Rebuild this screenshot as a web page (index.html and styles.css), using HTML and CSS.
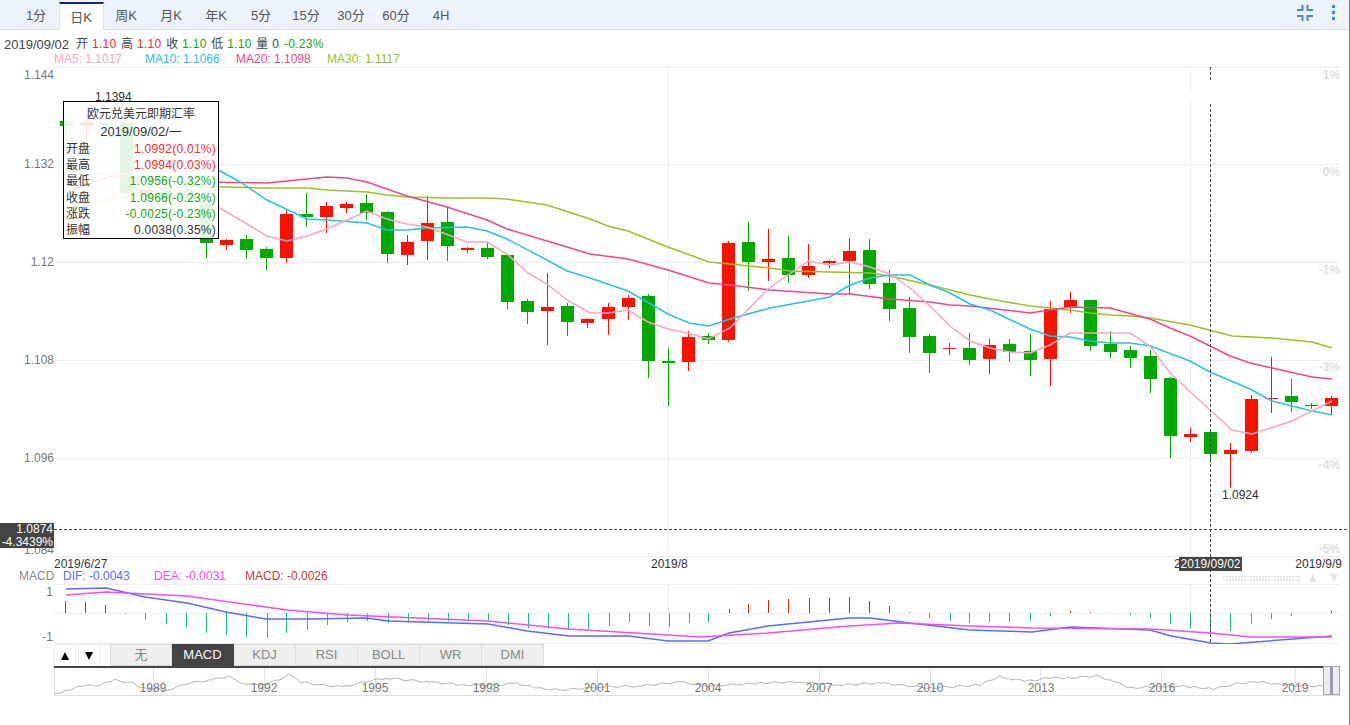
FILE: index.html
```html
<!DOCTYPE html>
<html lang="zh-CN">
<head>
    <meta charset="UTF-8">
    <meta name="viewport" content="width=device-width, initial-scale=1.0">
    <title>欧元兑美元即期汇率</title>
    <link rel="stylesheet" href="styles.css">
</head>
<body>
    <div class="kline-box">
        <div class="toolbar">
            <div class="tabs">
                <span class="tab">1分</span>
                <span class="tab active">日K</span>
                <span class="tab">周K</span>
                <span class="tab">月K</span>
                <span class="tab">年K</span>
                <span class="tab">5分</span>
                <span class="tab">15分</span>
                <span class="tab">30分</span>
                <span class="tab">60分</span>
                <span class="tab">4H</span>
            </div>
            <div class="tools">
                <svg class="icon-shrink" width="16" height="16" viewBox="0 0 16 16">
                    <path d="M4.5 0h2v6H0V4h4.5zM9.5 0h2v4H16v2H9.5zM0 10h6.5v6h-2v-4H0zM9.5 10H16v2h-4.5v4h-2z" fill="#4a86d8"/>
                </svg>
                <div class="icon-more"><i></i><i></i><i></i></div>
            </div>
        </div>

        <div class="quote-row">
            <span class="quote-date">2019/09/02</span>
            <span>开 <b class="up">1.10</b></span>
            <span>高 <b class="up">1.10</b></span>
            <span>收 <b class="down">1.10</b></span>
            <span>低 <b class="down">1.10</b></span>
            <span>量 0</span>
            <b class="down">-0.23%</b>
        </div>
        <div class="ma-row">
            <span class="ma5">MA5: 1.1017</span>
            <span class="ma10">MA10: 1.1066</span>
            <span class="ma20">MA20: 1.1098</span>
            <span class="ma30">MA30: 1.1117</span>
        </div>

        <svg id="main-chart" class="main-chart" width="1350" height="490" viewBox="0 67 1350 490">
            <g id="main-grid"></g>
            <g class="axis-y">
                <text x="54" y="79">1.144</text>
                <text x="54" y="168">1.132</text>
                <text x="54" y="266">1.12</text>
                <text x="54" y="364">1.108</text>
                <text x="54" y="462">1.096</text>
                <text x="54" y="554">1.084</text>
            </g>
            <g class="axis-pct">
                <text x="1340" y="79">1%</text>
                <text x="1340" y="176">0%</text>
                <text x="1340" y="274">-1%</text>
                <text x="1340" y="371">-3%</text>
                <text x="1340" y="469">-4%</text>
                <text x="1340" y="553">-5%</text>
            </g>
            <g id="candles"></g>
            <g id="ma-lines"></g>
            <text class="mark" x="95" y="101">1.1394</text>
            <text class="mark" x="1222" y="499">1.0924</text>
        </svg>

        <div class="date-row">
            <span>2019/6/27</span>
            <span class="date-mid">2019/8</span>
            <span class="date-cut">2</span>
            <span class="date-end">2019/9/9</span>
        </div>
        <div class="macd-row">
            <span class="macd-name">MACD</span>
            <span class="dif">DIF: -0.0043</span>
            <span class="dea">DEA: -0.0031</span>
            <span class="macd-val">MACD: -0.0026</span>
            <div class="scroller">
                <div class="scroll-dots"></div>
                <span class="tri-up"></span>
                <span class="tri-down"></span>
            </div>
        </div>

        <svg id="macd-chart" class="macd-chart" width="1350" height="60" viewBox="0 584 1350 60">
            <g id="macd-grid"></g>
            <g class="axis-y">
                <text x="53" y="596">1</text>
                <text x="53" y="641">-1</text>
            </g>
            <g id="macd-bars"></g>
            <g id="macd-lines"></g>
        </svg>

        <div class="indicator-row">
            <span class="arrow-btn"><i class="arrow-up"></i></span>
            <span class="arrow-btn"><i class="arrow-down"></i></span>
            <span class="arrow-gap"></span>
            <span class="ind-tab">无</span>
            <span class="ind-tab active">MACD</span>
            <span class="ind-tab">KDJ</span>
            <span class="ind-tab">RSI</span>
            <span class="ind-tab">BOLL</span>
            <span class="ind-tab">WR</span>
            <span class="ind-tab">DMI</span>
        </div>

        <svg id="navigator" class="navigator" width="1350" height="30" viewBox="0 666 1350 30">
            <rect x="54" y="666" width="1270" height="2" fill="#444"/>
            <g id="nav-grid"></g>
            <polyline id="nav-line" class="nav-line"/>
            <g class="nav-years">
                <text x="153" y="692">1989</text>
                <text x="264" y="692">1992</text>
                <text x="375" y="692">1995</text>
                <text x="486" y="692">1998</text>
                <text x="597" y="692">2001</text>
                <text x="708" y="692">2004</text>
                <text x="819" y="692">2007</text>
                <text x="930" y="692">2010</text>
                <text x="1041" y="692">2013</text>
                <text x="1162" y="692">2016</text>
                <text x="1295" y="692">2019</text>
            </g>
            <rect class="nav-handle" x="1323.5" y="666.5" width="16" height="28"/>
            <rect x="1330" y="667" width="3" height="27" fill="#9a9ab0"/>
        </svg>

        <!-- 浮层 -->
        <div class="price-tag">1.0874<br>-4.3439%</div>
        <div class="date-tag">2019/09/02</div>
        <svg class="crosshair" width="1350" height="725">
            <path d="M1210.5 67V80M1210.5 104V643M54 529.5H1350"/>
        </svg>
        <div class="tip">
            <div class="tip-title">欧元兑美元即期汇率</div>
            <div class="tip-date">2019/09/02/一</div>
            <div class="tip-line"><span>开盘</span><span class="up">1.0992(0.01%)</span></div>
            <div class="tip-line"><span>最高</span><span class="up">1.0994(0.03%)</span></div>
            <div class="tip-line"><span>最低</span><span class="down">1.0956(-0.32%)</span></div>
            <div class="tip-line"><span>收盘</span><span class="down">1.0966(-0.23%)</span></div>
            <div class="tip-line"><span>涨跌</span><span class="down">-0.0025(-0.23%)</span></div>
            <div class="tip-line"><span>振幅</span><span>0.0038(0.35%)</span></div>
        </div>
    </div>
    <script src="chart.js"></script>
</body>
</html>
```

FILE: styles.css
```css
* {
    box-sizing: border-box;
}
body {
    margin: 0;
    background: #fff;
    font-family: "Liberation Sans", "Noto Sans CJK SC", sans-serif;
    font-size: 12px;
    color: #444;
}
svg {
    display: block;
}
b {
    font-weight: normal;
}
.up {
    color: #f0302a;
}
.down {
    color: #12a812;
}
.kline-box {
    position: relative;
    width: 1350px;
    height: 725px;
    border-right: 1px solid #777;
    overflow: hidden;
}
.toolbar {
    display: flex;
    justify-content: space-between;
    height: 30px;
    background: #ecf3fd;
    border-bottom: 1px solid #d9e3f0;
}
.tabs {
    display: flex;
    padding-left: 13.5px;
}
.tab {
    width: 45px;
    height: 30px;
    line-height: 31px;
    text-align: center;
    font-size: 13px;
    color: #555;
}
.tab.active {
    margin-top: 2px;
    height: 28px;
    line-height: 27px;
    background: #fff;
    border-top: 2px solid #0b2a80;
    border-left: 1px solid #d9e3f0;
    border-right: 1px solid #d9e3f0;
}
.tools {
    display: flex;
    align-items: flex-start;
    gap: 19px;
    padding: 5px 14px 0 0;
}
.icon-more {
    display: flex;
    flex-direction: column;
    gap: 3px;
}
.icon-more i {
    width: 3px;
    height: 3px;
    background: #4a86d8;
}
.quote-row {
    display: flex;
    gap: 4.6px;
    height: 21px;
    padding: 7px 0 0 4px;
    letter-spacing: 0.3px;
    line-height: 15px;
}
.quote-date {
    width: 67.4px;
    font-size: 13px;
    letter-spacing: 0;
}
.ma-row {
    display: flex;
    height: 16px;
    padding: 1px 0 0 54px;
    line-height: 14px;
}
.ma-row span {
    width: 91px;
}
.ma5 { color: #f9a5c0; }
.ma10 { color: #2bc0e0; }
.ma20 { color: #f0478a; }
.ma30 { color: #9abf28; }
.axis-y text {
    font-size: 12px;
    fill: #777;
    text-anchor: end;
}
.axis-pct text {
    font-size: 12px;
    font-weight: bold;
    fill: #dedede;
    text-anchor: end;
}
.mark {
    font-size: 12px;
    fill: #333;
}
.date-row {
    position: relative;
    height: 14px;
    padding-left: 54px;
    line-height: 14px;
    color: #333;
}
.date-mid {
    position: absolute;
    left: 651px;
}
.date-cut {
    position: absolute;
    left: 1174px;
}
.date-end {
    position: absolute;
    right: 7px;
}
.macd-row {
    position: relative;
    display: flex;
    height: 13px;
    padding-left: 19px;
    line-height: 11px;
}
.macd-name {
    width: 44px;
    color: #888;
}
.dif, .dea, .macd-val {
    width: 91px;
}
.dif { color: #5a6cf5; }
.dea { color: #f050f0; }
.macd-val { color: #c43a3a; }
.scroller {
    position: absolute;
    left: 1223px;
    top: 3px;
    display: flex;
    align-items: center;
    height: 8px;
}
.scroll-dots {
    width: 77px;
    height: 6px;
    margin-right: 9px;
    background:
        repeating-linear-gradient(0deg, transparent 0 2px, #fff 2px 3px),
        repeating-linear-gradient(90deg, #e4e4e4 0 2px, #fff 2px 3px);
}
.tri-up, .tri-down {
    width: 0;
    height: 0;
    border-left: 4px solid transparent;
    border-right: 4px solid transparent;
}
.tri-up {
    border-bottom: 8px solid #e4e4e4;
    margin-right: 13px;
}
.tri-down {
    border-top: 8px solid #e4e4e4;
}
.indicator-row {
    display: flex;
    height: 22px;
    padding-left: 54px;
}
.arrow-btn {
    display: flex;
    align-items: center;
    justify-content: center;
    width: 22px;
    margin-right: 2px;
    border: 1px solid #eee;
    border-bottom: 0;
}
.arrow-btn + .arrow-btn {
    margin-right: 0;
}
.arrow-up, .arrow-down {
    width: 0;
    height: 0;
    border-left: 4.5px solid transparent;
    border-right: 4.5px solid transparent;
}
.arrow-up {
    border-bottom: 8px solid #000;
}
.arrow-down {
    border-top: 8px solid #000;
}
.arrow-gap {
    width: 10px;
    border-top: 1px solid #eee;
}
.ind-tab {
    width: 62px;
    text-align: center;
    line-height: 20px;
    font-size: 13px;
    color: #888;
    background: #eee;
    border: 1px solid #ddd;
    border-left: 0;
}
.ind-tab:nth-child(4) {
    border-left: 1px solid #ddd;
}
.ind-tab.active {
    background: #444;
    border-color: #444;
    color: #fff;
}
.nav-line {
    fill: none;
    stroke: #b5b5b5;
    stroke-width: 1;
}
.nav-years text {
    font-size: 12px;
    fill: #777;
    text-anchor: middle;
}
.nav-handle {
    fill: #ececf0;
    stroke: #a0a0b8;
}
.price-tag {
    position: absolute;
    left: 0;
    top: 523px;
    width: 54px;
    height: 25px;
    padding-right: 1px;
    background: #444;
    color: #fff;
    text-align: right;
    line-height: 12.5px;
}
.date-tag {
    position: absolute;
    left: 1179px;
    top: 557px;
    width: 63px;
    height: 14px;
    background: #444;
    color: #fff;
    text-align: center;
    line-height: 14px;
}
.crosshair {
    position: absolute;
    left: 0;
    top: 0;
    pointer-events: none;
}
.crosshair path {
    fill: none;
    stroke: #444;
    stroke-dasharray: 3 2;
}
.tip {
    position: absolute;
    left: 63px;
    top: 101px;
    width: 156px;
    height: 138px;
    padding: 4px 2px 0;
    background: rgba(255, 255, 255, 0.89);
    border: 1px solid #000;
    color: #333;
    line-height: 16.2px;
}
.tip-title, .tip-date {
    text-align: center;
}
.tip-title {
    height: 18px;
}
.tip-date {
    font-size: 13px;
    height: 17px;
}
.tip-line {
    display: flex;
    justify-content: space-between;
}
.tip-line span:last-child {
    letter-spacing: 0.25px;
}
```

FILE: chart.js
```js
// data is read in page pixels, each svg viewBox matches its place on the page
var NS = 'http://www.w3.org/2000/svg';
var RED = '#f51400', GREEN = '#00a800';

function add(parent, tag, attrs) {
    var el = document.createElementNS(NS, tag);
    for (var k in attrs) el.setAttribute(k, attrs[k]);
    parent.appendChild(el);
    return el;
}

function line(parent, x1, y1, x2, y2, color) {
    add(parent, 'line', { x1: x1, y1: y1, x2: x2, y2: y2, stroke: color });
}

function polyline(parent, pts, color) {
    add(parent, 'polyline', {
        points: pts.map(function (p) { return p.join(','); }).join(' '),
        fill: 'none',
        stroke: color,
        'stroke-width': 1.5
    });
}

// grid
var GRID = '#ececec';
var mainGrid = document.getElementById('main-grid');
[67, 164, 262, 360, 458, 556].forEach(function (y) {
    line(mainGrid, 54, y + 0.5, 1340, y + 0.5, GRID);
});
line(mainGrid, 668.5, 67, 668.5, 556, GRID);
line(mainGrid, 1190.5, 67, 1190.5, 92, GRID);
line(mainGrid, 1190.5, 100, 1190.5, 556, GRID);

var macdGrid = document.getElementById('macd-grid');
[584, 613, 643].forEach(function (y) {
    line(macdGrid, 54, y + 0.5, 1340, y + 0.5, GRID);
});
line(macdGrid, 668.5, 584, 668.5, 643, GRID);
line(macdGrid, 1190.5, 584, 1190.5, 643, GRID);

// candles: x, up?, body top, body bottom, wick top, wick bottom
var candles = [
    [66, 0, 121, 126, 114, 150], [86, 1, 122, 126, 114, 150], [106, 0, 123, 125, 118, 130],
    [126, 0, 123, 193, 118, 200], [146, 1, 190, 197, 187, 210], [166, 0, 188, 199, 186, 205],
    [186, 0, 190, 198, 188, 208], [206, 0, 200, 243, 197, 258], [226, 1, 240, 245, 239, 250],
    [246, 0, 239, 250, 235, 259], [266, 0, 249, 258, 247, 270], [286, 1, 214, 258, 210, 263],
    [306, 0, 214, 217, 193, 227], [326, 1, 206, 217, 202, 233], [346, 1, 204, 208, 202, 213],
    [366, 0, 203, 213, 194, 220], [387, 0, 212, 254, 211, 263], [407, 1, 242, 255, 235, 265],
    [427, 1, 223, 241, 196, 260], [447, 0, 222, 246, 207, 261], [467, 1, 248, 250, 247, 253],
    [487, 0, 248, 257, 242, 259], [507, 0, 255, 302, 255, 309], [527, 0, 301, 312, 299, 324],
    [547, 1, 307, 311, 273, 345], [567, 0, 306, 322, 303, 336], [587, 1, 319, 323, 318, 328],
    [608, 1, 307, 319, 303, 335], [628, 1, 298, 307, 295, 320], [648, 0, 296, 361, 294, 378],
    [668, 0, 361, 363, 348, 406], [688, 1, 337, 362, 331, 371], [708, 0, 336, 340, 333, 344],
    [728, 1, 243, 340, 241, 342], [748, 0, 242, 262, 222, 291], [768, 1, 259, 262, 229, 281],
    [788, 0, 258, 275, 236, 283], [808, 1, 266, 275, 244, 278], [829, 1, 261, 263, 260, 268],
    [849, 1, 251, 261, 238, 294], [869, 0, 250, 284, 239, 289], [889, 0, 283, 309, 270, 321],
    [909, 0, 308, 337, 297, 353], [929, 0, 336, 353, 334, 373], [949, 1, 348, 349, 343, 355],
    [969, 0, 348, 360, 333, 365], [989, 1, 345, 359, 339, 374], [1009, 0, 344, 352, 339, 362],
    [1030, 0, 351, 360, 334, 376], [1050, 1, 309, 359, 301, 386], [1070, 1, 300, 308, 292, 313],
    [1090, 0, 300, 346, 300, 351], [1110, 0, 344, 352, 331, 358], [1130, 0, 350, 358, 346, 368],
    [1150, 0, 356, 379, 350, 393], [1170, 0, 378, 436, 377, 458], [1190, 1, 434, 437, 428, 442],
    [1210, 0, 432, 454, 432, 463], [1230, 1, 450, 454, 443, 488], [1251, 1, 399, 451, 395, 453],
    [1271, 1, 398, 399, 357, 413], [1291, 0, 396, 402, 379, 412], [1311, 0, 405, 406, 403, 409],
    [1331, 1, 398, 406, 396, 415]
];
var candleBox = document.getElementById('candles');
candles.forEach(function (c) {
    var color = c[1] ? RED : GREEN;
    add(candleBox, 'rect', { x: c[0], y: c[4], width: 1, height: c[5] - c[4], fill: color });
    add(candleBox, 'rect', { x: c[0] - 6, y: c[2], width: 13, height: c[3] - c[2], fill: color });
});

// moving averages
var ma30 = [[66, 207], [130, 196], [190, 186], [267, 188], [307, 188], [327, 190], [367, 192], [387, 195], [407, 197], [447, 198], [487, 198], [507, 199], [547, 205], [590, 219], [608, 226], [628, 231], [668, 247], [709, 262], [730, 264], [770, 268], [790, 271], [830, 272], [870, 273], [890, 276], [930, 285], [970, 295], [990, 299], [1030, 306], [1050, 308], [1070, 310], [1090, 313], [1110, 315], [1130, 316], [1150, 318], [1190, 325], [1232, 336], [1272, 338], [1312, 342], [1332, 348]];
var ma20 = [[66, 192], [110, 176], [150, 180], [190, 182], [267, 183], [307, 179], [327, 177], [347, 178], [367, 182], [407, 196], [447, 207], [487, 220], [507, 229], [547, 241], [567, 247], [590, 254], [628, 259], [668, 270], [709, 283], [730, 285], [770, 290], [830, 294], [850, 294], [890, 299], [930, 302], [950, 305], [970, 306], [1030, 313], [1070, 307], [1110, 308], [1150, 319], [1170, 328], [1190, 336], [1230, 356], [1250, 363], [1272, 368], [1312, 377], [1332, 379]];
var ma10 = [[66, 165], [77, 159], [107, 137], [127, 135], [147, 138], [190, 153], [213, 167], [240, 182], [267, 200], [307, 219], [327, 220], [367, 223], [387, 230], [407, 230], [427, 228], [467, 227], [487, 231], [507, 239], [547, 260], [567, 271], [590, 278], [628, 291], [668, 314], [689, 323], [709, 326], [730, 319], [770, 308], [830, 297], [850, 285], [870, 278], [890, 275], [910, 275], [930, 285], [950, 293], [970, 304], [990, 310], [1030, 329], [1050, 336], [1070, 337], [1090, 341], [1110, 343], [1130, 343], [1150, 346], [1190, 361], [1210, 372], [1250, 389], [1272, 401], [1292, 406], [1312, 411], [1332, 415]];
var ma5 = [[66, 187], [93, 173], [107, 173], [133, 175], [190, 195], [220, 208], [267, 236], [287, 241], [307, 236], [327, 229], [367, 211], [387, 219], [407, 224], [427, 227], [467, 242], [487, 242], [507, 254], [528, 273], [547, 284], [567, 300], [590, 313], [608, 313], [628, 310], [648, 322], [668, 329], [688, 333], [708, 339], [730, 328], [768, 289], [808, 261], [830, 265], [850, 262], [870, 267], [890, 274], [910, 288], [930, 306], [950, 326], [970, 341], [990, 348], [1010, 352], [1030, 353], [1050, 345], [1070, 333], [1130, 333], [1150, 346], [1170, 373], [1210, 410], [1232, 430], [1252, 434], [1292, 421], [1312, 411], [1332, 401]];
var maBox = document.getElementById('ma-lines');
polyline(maBox, ma30, '#9abf28');
polyline(maBox, ma20, '#f0478a');
polyline(maBox, ma10, '#2bc0e0');
polyline(maBox, ma5, '#f9a5c0');

// macd histogram: x, end of bar (613 is the zero line)
var bars = [[65, 601], [85, 602], [105, 605], [125, 614], [145, 620], [166, 624], [186, 627], [206, 633], [226, 635], [246, 637], [267, 638], [286, 633], [307, 630], [327, 625], [347, 622], [367, 621], [388, 623], [408, 623], [428, 621], [448, 621], [468, 621], [488, 621], [508, 625], [528, 628], [548, 629], [568, 629], [588, 629], [609, 626], [629, 622], [649, 626], [669, 627], [689, 623], [708, 622], [729, 609], [748, 604], [768, 600], [788, 599], [809, 598], [829, 598], [849, 597], [869, 601], [889, 606], [909, 612], [929, 618], [950, 621], [969, 623], [989, 622], [1009, 622], [1030, 621], [1050, 616], [1070, 611], [1090, 612], [1130, 615], [1150, 618], [1170, 624], [1190, 628], [1210, 633], [1230, 631], [1251, 624], [1271, 619], [1291, 616], [1331, 611]];
var barBox = document.getElementById('macd-bars');
bars.forEach(function (b) {
    var top = Math.min(b[1], 613), bottom = Math.max(b[1], 613);
    add(barBox, 'rect', { x: b[0], y: top, width: 1, height: bottom - top, fill: b[1] < 613 ? '#c8300f' : '#1fbb8f' });
});

var dif = [[66, 589], [106, 588], [145, 597], [187, 603], [226, 612], [266, 619], [307, 619], [367, 618], [388, 621], [488, 624], [527, 631], [569, 636], [629, 636], [668, 641], [708, 641], [729, 633], [768, 626], [849, 618], [870, 618], [910, 623], [970, 630], [1032, 632], [1070, 627], [1150, 630], [1171, 636], [1211, 643], [1230, 644], [1332, 636]];
var dea = [[66, 595], [106, 592], [187, 596], [287, 610], [347, 615], [488, 621], [568, 629], [668, 635], [700, 637], [768, 633], [849, 626], [899, 623], [970, 626], [1032, 628], [1151, 629], [1210, 633], [1252, 637], [1332, 637]];
var macdLines = document.getElementById('macd-lines');
polyline(macdLines, dif, '#5a6cf5');
polyline(macdLines, dea, '#f050f0');

// navigator
var navGrid = document.getElementById('nav-grid');
[54, 153, 264, 375, 486, 597, 708, 819, 930, 1040, 1161, 1295].forEach(function (x) {
    line(navGrid, x + 0.5, 668, x + 0.5, 695, '#e2e2e2');
});
line(navGrid, 54, 695.5, 1340, 695.5, '#ddd');

var navPts = [[54, 694], [68, 690], [82, 686], [100, 685], [114, 680], [132, 683], [143, 688], [168, 690], [189, 683], [211, 680], [230, 676], [239, 683], [261, 685], [279, 680], [289, 674], [300, 682], [321, 685], [343, 687], [364, 682], [386, 678], [429, 682], [464, 685], [500, 685], [516, 683], [536, 688], [560, 690], [600, 687], [640, 686], [680, 682], [710, 686], [760, 683], [800, 682], [840, 685], [880, 683], [930, 688], [980, 685], [1000, 676], [1010, 679], [1027, 681], [1050, 678], [1067, 678], [1097, 676], [1113, 681], [1130, 688], [1150, 687], [1173, 686], [1193, 687], [1213, 689], [1240, 683], [1260, 682], [1283, 685], [1307, 686], [1323, 686]];
var navOut = [];
navPts.forEach(function (p, i) {
    var next = navPts[i + 1];
    if (!next) { navOut.push(p.join(',')); return; }
    for (var x = p[0]; x < next[0]; x += 3) {
        var y = p[1] + (next[1] - p[1]) * (x - p[0]) / (next[0] - p[0]);
        navOut.push(x + ',' + (y + Math.sin(x * 1.7) * 0.8).toFixed(1));
    }
});
document.getElementById('nav-line').setAttribute('points', navOut.join(' '));
```
